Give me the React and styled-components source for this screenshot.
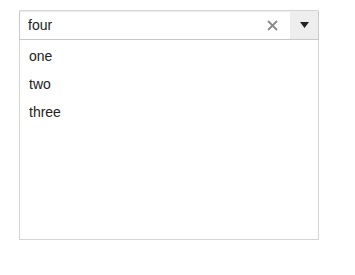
import React from "react";
import styled, { createGlobalStyle } from "styled-components";

const Global = createGlobalStyle`
  html, body { margin: 0; padding: 0; background: #fff; }
  body { font-family: "Liberation Sans", Arial, sans-serif; }
`;

const Page = styled.div`
  padding: 10px 0 0 19px;
`;

const Combo = styled.div`
  width: 300px;
  display: flex;
  flex-direction: column;
`;

const Control = styled.div`
  display: flex;
  align-items: stretch;
  height: 30px;
  box-sizing: border-box;
  border: 1px solid #c8c8c8;
  border-top-color: #d4d4d4;
  border-radius: 2px 2px 0 0;
  box-shadow: inset 0 1px 1px rgba(0, 0, 0, 0.08);
  background: #fff;
`;

const Input = styled.div`
  flex: 1;
  display: flex;
  align-items: center;
  padding-left: 8px;
  font-size: 14px;
  color: #222;
`;

const Clear = styled.span`
  display: flex;
  align-items: center;
  justify-content: center;
  width: 18px;
  margin-right: 9px;
`;

const Toggle = styled.div`
  width: 28px;
  display: flex;
  align-items: center;
  justify-content: center;
  background: #eeeeee;
`;

const Menu = styled.ul`
  list-style: none;
  margin: 0;
  padding: 2px 0 0;
  height: 200px;
  box-sizing: border-box;
  border: 1px solid #d4d4d4;
  border-top: none;
`;

const Item = styled.li`
  height: 28px;
  line-height: 28px;
  padding-left: 9px;
  font-size: 14px;
  color: #222;
`;

export default function App() {
  return (
    <Page>
      <Global />
      <Combo>
        <Control>
          <Input>four</Input>
          <Clear>
            <svg width="11" height="11" viewBox="0 0 11 11">
              <path d="M1 1 L10 10 M10 1 L1 10" stroke="#8a8a8a" strokeWidth="1.8" />
            </svg>
          </Clear>
          <Toggle>
            <svg width="9" height="6" viewBox="0 0 9 6">
              <path d="M0 0 H9 L4.5 6 Z" fill="#222" />
            </svg>
          </Toggle>
        </Control>
        <Menu>
          <Item>one</Item>
          <Item>two</Item>
          <Item>three</Item>
        </Menu>
      </Combo>
    </Page>
  );
}
